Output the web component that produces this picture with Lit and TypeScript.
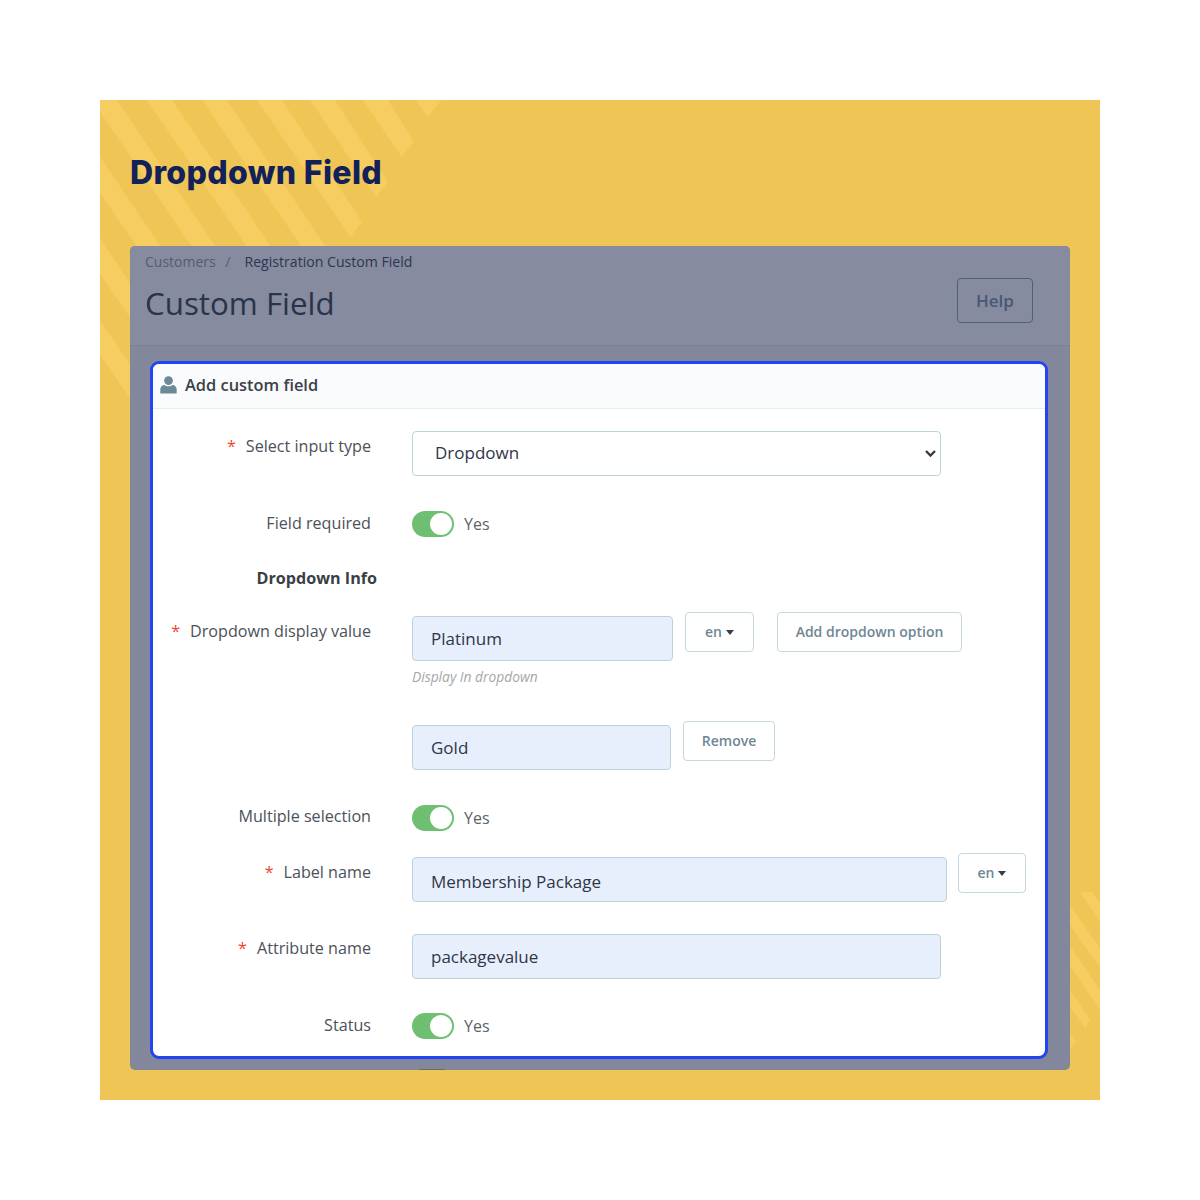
import { LitElement, html, css, svg } from "lit";
import { customElement } from "lit/decorators.js";

const stripe = (x: number, y1: number, w = 25) => {
  const dx = 0.68;
  const xb = x + dx * y1;
  return `${x},0 ${x + w},0 ${xb + 12},${y1 - 15} ${xb},${y1}`;
};

@customElement("app-root")
export class AppRoot extends LitElement {
  static styles = css`
    :host { display: block; width: 1200px; height: 1200px; background: #fff; font-family: "Open Sans", sans-serif; color: #4a4f57; overflow: hidden; }
    * { box-sizing: border-box; }
    .page { padding: 100px; }
    .panel { position: relative; width: 1000px; height: 1000px; background: #efc555; padding: 0 30px; overflow: hidden; }
    .deco { position: absolute; left: 0; top: 0; width: 1000px; height: 1000px; }
    .deco polygon { fill: #f6cd60; }
    h1 { position: relative; margin: 0; padding-top: 53px; height: 146px; font: 800 32px/40px "Inter", sans-serif; color: #12215a; letter-spacing: 0.35px; }
    .shell { position: relative; height: 824px; background: #82879b; border-radius: 5px; }
    .top { height: 100px; background: #868b9f; border-radius: 5px 5px 0 0; border-bottom: 1px solid #7d8296; padding: 7px 37px 0 15px; display: flex; justify-content: space-between; }
    .crumbs { font-size: 14px; line-height: 18px; color: #565c72; }
    .crumbs .sep { margin: 0 14px 0 6px; }
    .crumbs b { font-weight: 400; font-size: 14.1px; color: #2d3650; }
    .title { font-size: 31.3px; line-height: 44px; margin-top: 10px; color: #2a334c; }
    .help { margin-top: 25px; width: 76px; height: 45px; border: 1.5px solid #4e5f7c; border-radius: 4px; font-size: 17px; font-weight: 600; color: #46587a; display: flex; align-items: center; justify-content: center; }
    .card { margin: 15px 22px 0 20px; height: 698px; background: #fff; border: 3px solid #2244f2; border-radius: 9px; overflow: hidden; }
    .head { height: 45px; background: #fafbfd; border-bottom: 1px solid #e9eded; display: flex; align-items: center; gap: 8px; padding: 0 0 3px 7px; font-size: 16.4px; font-weight: 600; color: #3c4048; }
    .row { display: grid; grid-template-columns: 218px auto; column-gap: 41px; align-items: start; }
    .lab { text-align: right; font-size: 16.15px; line-height: 22px; color: #4c5159; }
    .lab i { font-style: normal; color: #f0452f; margin-right: 10px; }
    .ctl { display: flex; align-items: flex-start; }
    .field { height: 45px; border: 1.5px solid #bdd3da; border-radius: 4px; font-size: 17px; line-height: 44px; padding-left: 18px; color: #2f3648; background: #e8effc; }
    .low { line-height: 48px; }
    .sel { background: #fff; width: 529px; padding: 0 4px 2px 22px; display: flex; justify-content: space-between; align-items: center; line-height: 22px; }
    .sel svg { margin-top: 2px; }
    .sw { width: 42px; height: 26px; border-radius: 13px; background: #6fbf73; position: relative; margin-right: 10px; flex: none; }
    .sw::after { content: ""; position: absolute; right: 2px; top: 2px; width: 22px; height: 22px; background: #fff; border-radius: 50%; }
    .yes { font-size: 16px; line-height: 26px; color: #5f6368; }
    .btn { height: 40px; padding-bottom: 2px; border: 1.5px solid #c4d8dd; border-radius: 4px; background: #fff; color: #6e8794; font-size: 14px; font-weight: 600; display: flex; align-items: center; justify-content: center; gap: 4px; }
    .caret { width: 0; height: 0; border-left: 4.5px solid transparent; border-right: 4.5px solid transparent; border-top: 5px solid #3a3d42; margin-top: 2px; }
    .hint { font-size: 13.8px; font-style: italic; color: #a4a7aa; line-height: 18px; margin-top: 7px; }
    .info { text-align: right; font-size: 16.15px; font-weight: 700; line-height: 22px; color: #3a3f47; width: 224px; margin-top: 30px; }
    .r1 { margin-top: 22px; } .r1 .lab { margin-top: 4px; }
    .r2 { margin-top: 35px; } .r2 .lab { margin-top: 1px; }
    .r3 { margin-top: 27px; } .r3 .lab { margin-top: 4px; }
    .r4 { margin-top: 39px; }
    .r5 { margin-top: 35px; }
    .r6 { margin-top: 26px; } .r6 .lab { margin-top: 4px; }
    .r7 { margin-top: 32px; } .r7 .lab { margin-top: 3px; }
    .r8 { margin-top: 34px; } .r8 .lab { margin-top: 1px; }
    .lift { margin-top: -4px; }
    .stub { position: absolute; left: 289px; bottom: 0; width: 26px; height: 1px; background: #5a7560; border-radius: 3px 3px 0 0; }
  `;

  private toggle() {
    return html`<div class="ctl"><span class="sw"></span><span class="yes">Yes</span></div>`;
  }

  render() {
    const topStripes: [number, number][] = [
      [47, 400], [102, 400], [157, 137], [210, 97], [263, 57], [316, 17],
      [-8, 400], [-63, 400], [-118, 400], [-173, 400],
    ];
    const polys = [
      ...topStripes.map(([x, end]) => stripe(x, end)),
      "980,792 992,792 1000,803 1000,822",
      "970,805 1000,848 1000,868 970,825",
      "970,846 1000,890 1000,910 970,866",
      "970,890 990,920 985,928 970,907",
      "970,933 976,941 970,950",
    ];
    return html`<div class="page"><div class="panel">
      <svg class="deco" viewBox="0 0 1000 1000">${polys.map((p) => svg`<polygon points=${p}></polygon>`)}</svg>
      <h1>Dropdown Field</h1>
      <div class="shell">
        <div class="top">
          <div>
            <div class="crumbs">Customers<span class="sep"> /</span><b>Registration Custom Field</b></div>
            <div class="title">Custom Field</div>
          </div>
          <div class="help">Help</div>
        </div>
        <div class="card">
          <div class="head">
            <svg width="17" height="18" viewBox="0 0 17 18"><circle cx="8.5" cy="4.6" r="4.4" fill="#6c8a96"></circle><path d="M0.3 17.5V13.6C0.3 10.8 2.6 9 4.4 9c1 .8 2.5 1.3 4.1 1.3s3.1-.5 4.1-1.3c1.8 0 4.1 1.8 4.1 4.6v3.9z" fill="#6c8a96"></path></svg>
            Add custom field
          </div>
          <div class="row r1">
            <div class="lab"><i>*</i>Select input type</div>
            <div class="field sel">Dropdown
              <svg width="11" height="7" viewBox="0 0 11 7"><path d="M1 1l4.5 4.5L10 1" fill="none" stroke="#3a3a3a" stroke-width="2.4"></path></svg>
            </div>
          </div>
          <div class="row r2"><div class="lab">Field required</div>${this.toggle()}</div>
          <div class="info">Dropdown Info</div>
          <div class="row r3">
            <div class="lab"><i>*</i>Dropdown display value</div>
            <div>
              <div class="ctl">
                <div class="field" style="width:261px">Platinum</div>
                <div class="btn lift" style="width:69px;margin-left:12px">en <span class="caret"></span></div>
                <div class="btn lift" style="width:185px;margin-left:23px">Add dropdown option</div>
              </div>
              <div class="hint">Display In dropdown</div>
            </div>
          </div>
          <div class="row r4">
            <div></div>
            <div class="ctl">
              <div class="field" style="width:259px">Gold</div>
              <div class="btn lift" style="width:92px;margin-left:12px">Remove</div>
            </div>
          </div>
          <div class="row r5"><div class="lab">Multiple selection</div>${this.toggle()}</div>
          <div class="row r6">
            <div class="lab"><i>*</i>Label name</div>
            <div class="ctl">
              <div class="field low" style="width:535px">Membership Package</div>
              <div class="btn lift" style="width:68px;margin-left:11px">en <span class="caret"></span></div>
            </div>
          </div>
          <div class="row r7">
            <div class="lab"><i>*</i>Attribute name</div>
            <div class="field" style="width:529px">packagevalue</div>
          </div>
          <div class="row r8"><div class="lab">Status</div>${this.toggle()}</div>
        </div>
        <div class="stub"></div>
      </div>
    </div></div>`;
  }
}
